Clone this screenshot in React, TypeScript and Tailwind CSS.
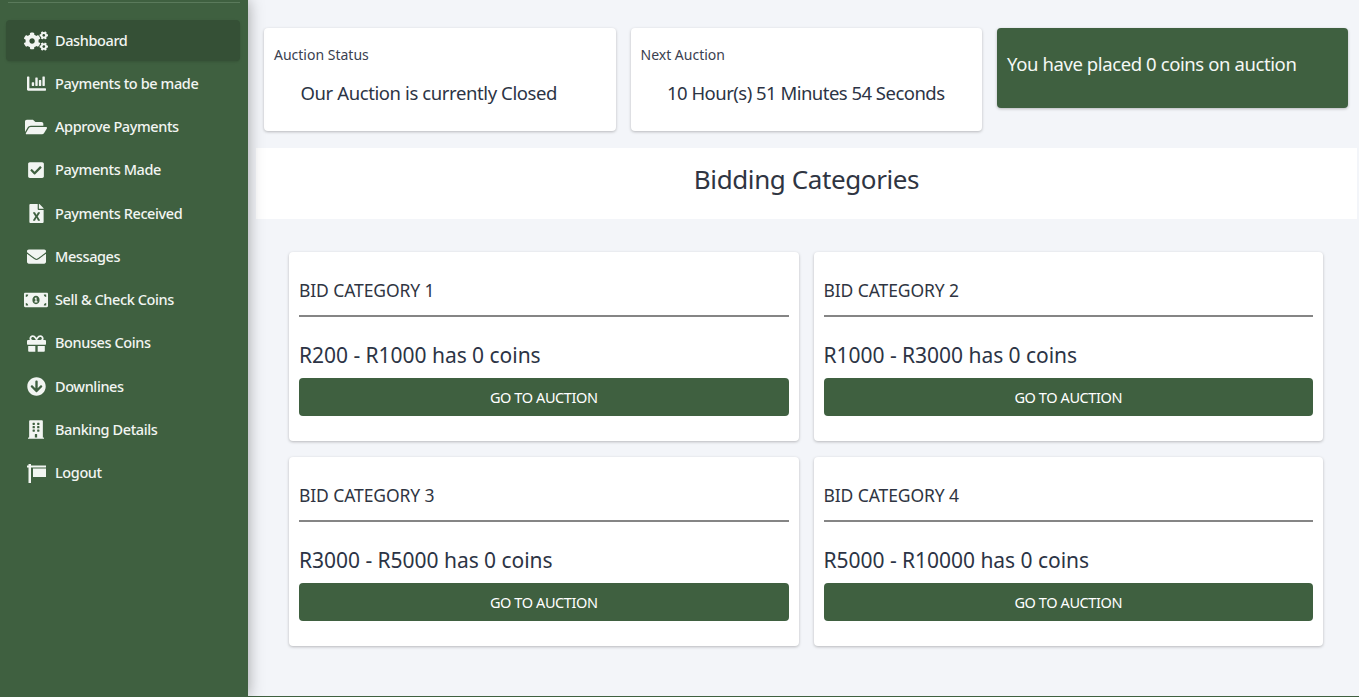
import { FaCogs, FaChartBar, FaFolderOpen, FaCheckSquare, FaFileExcel, FaEnvelope, FaMoneyBillAlt, FaGift, FaArrowCircleDown, FaBuilding } from "react-icons/fa"
import type { ComponentType } from "react"

function FlagIcon({ className }: { className?: string }) {
  return (
    <svg viewBox="0 0 19 19" className={className} fill="currentColor">
      <rect x="1.5" y="0" width="2.5" height="19" />
      <rect x="0" y="1.5" width="19" height="2" />
      <rect x="6" y="4.5" width="13" height="8.5" />
    </svg>
  )
}

const navItems: { label: string; icon: ComponentType<{ className?: string }>; size: string }[] = [
  { label: "Dashboard", icon: FaCogs, size: "w-[24px] h-[20px]" },
  { label: "Payments to be made", icon: FaChartBar, size: "w-[19px] h-[19px]" },
  { label: "Approve Payments", icon: FaFolderOpen, size: "w-[22px] h-[20px]" },
  { label: "Payments Made", icon: FaCheckSquare, size: "w-[18px] h-[18px]" },
  { label: "Payments Received", icon: FaFileExcel, size: "w-[15px] h-[19px]" },
  { label: "Messages", icon: FaEnvelope, size: "w-[19px] h-[19px]" },
  { label: "Sell & Check Coins", icon: FaMoneyBillAlt, size: "w-[24px] h-[20px]" },
  { label: "Bonuses Coins", icon: FaGift, size: "w-[19px] h-[19px]" },
  { label: "Downlines", icon: FaArrowCircleDown, size: "w-[19px] h-[19px]" },
  { label: "Banking Details", icon: FaBuilding, size: "w-[16px] h-[19px]" },
  { label: "Logout", icon: FlagIcon, size: "w-[19px] h-[19px]" },
]

const categories = [
  { title: "BID CATEGORY 1", range: "R200 - R1000 has 0 coins" },
  { title: "BID CATEGORY 2", range: "R1000 - R3000 has 0 coins" },
  { title: "BID CATEGORY 3", range: "R3000 - R5000 has 0 coins" },
  { title: "BID CATEGORY 4", range: "R5000 - R10000 has 0 coins" },
]

function Sidebar() {
  return (
    <aside className="w-[248px] h-full shrink-0 bg-[#3f6040] shadow-[0_0_15px_rgba(0,0,0,0.35)] z-10 px-[6px]">
      <div className="h-[3px] mx-[2px] border-b border-[#5a7a5b]" />
      <nav className="mt-[17px] flex flex-col w-[234px]">
        {navItems.map((item, i) => {
          const Icon = item.icon
          return (
            <a
              key={item.label}
              className={`flex items-center h-[41px] mb-[2.25px] rounded text-[14.5px] font-medium tracking-[-0.4px] text-[#f2f5f2] ${
                i === 0 ? "bg-[#355036] shadow-sm" : ""
              }`}
            >
              <span className="w-[49px] pl-[11px] flex justify-center shrink-0">
                <Icon className={item.size} />
              </span>
              {item.label}
            </a>
          )
        })}
      </nav>
    </aside>
  )
}

function StatusCard({ title, children }: { title: string; children: React.ReactNode }) {
  return (
    <div className="w-[351.5px] h-[103px] bg-white rounded shadow-[0_1px_3px_rgba(0,0,0,0.25)] pl-[10px] pt-[17px]">
      <div className="text-[14px] leading-[20px] text-[#3a4150]">{title}</div>
      {children}
    </div>
  )
}

function CategoryCard({ title, range }: { title: string; range: string }) {
  return (
    <div className="h-[189px] bg-white rounded shadow-[0_1px_3px_rgba(0,0,0,0.25)] px-[10px] pt-[26px]">
      <div className="text-[17.5px] leading-[24px] tracking-[-0.1px] text-[#2f3542] pb-[13px] border-b-2 border-[#858585]">{title}</div>
      <div className="mt-[24px] text-[21px] leading-[28px] tracking-[-0.03px] text-[#2c3445]">{range}</div>
      <button className="mt-[9px] w-full h-[38px] pt-[1px] rounded bg-[#3f6040] text-white text-[14.5px] tracking-[-0.4px]">GO TO AUCTION</button>
    </div>
  )
}

export default function App() {
  return (
    <div className="flex w-[1359px] h-[697px] overflow-hidden bg-[#f3f5f9] font-['Noto_Sans',sans-serif]">
      <Sidebar />
      <main className="flex-1 flex flex-col h-full border-b border-[#3f6040]">
        <div className="flex gap-[15px] pl-[16px] pt-[28px]">
          <StatusCard title="Auction Status">
            <div className="mt-[15px] pl-[26.5px] text-[18.5px] leading-[26px] tracking-[-0.4px] text-[#2c3445]">Our Auction is currently Closed</div>
          </StatusCard>
          <StatusCard title="Next Auction">
            <div className="mt-[15px] pl-[26.5px] text-[18.5px] leading-[26px] tracking-[-0.52px] text-[#2c3445]">10 Hour(s) 51 Minutes 54 Seconds</div>
          </StatusCard>
          <div className="w-[351px] h-[80px] bg-[#3f6040] rounded shadow-[0_1px_3px_rgba(0,0,0,0.25)] pl-[10px] pt-[23px] text-[18.5px] leading-[26px] tracking-[-0.4px] text-[#f5f8f5]">
            You have placed 0 coins on auction
          </div>
        </div>
        <div className="mt-[17px] ml-[8px] mr-[2px] h-[71px] pb-[8px] bg-white flex items-center justify-center text-[26px] tracking-[-0.4px] text-[#2f3542]">
          Bidding Categories
        </div>
        <div className="mt-[33px] ml-[41px] w-[1034px] grid grid-cols-2 gap-x-[15px] gap-y-[16px]">
          {categories.map((c) => (
            <CategoryCard key={c.title} title={c.title} range={c.range} />
          ))}
        </div>
      </main>
    </div>
  )
}
